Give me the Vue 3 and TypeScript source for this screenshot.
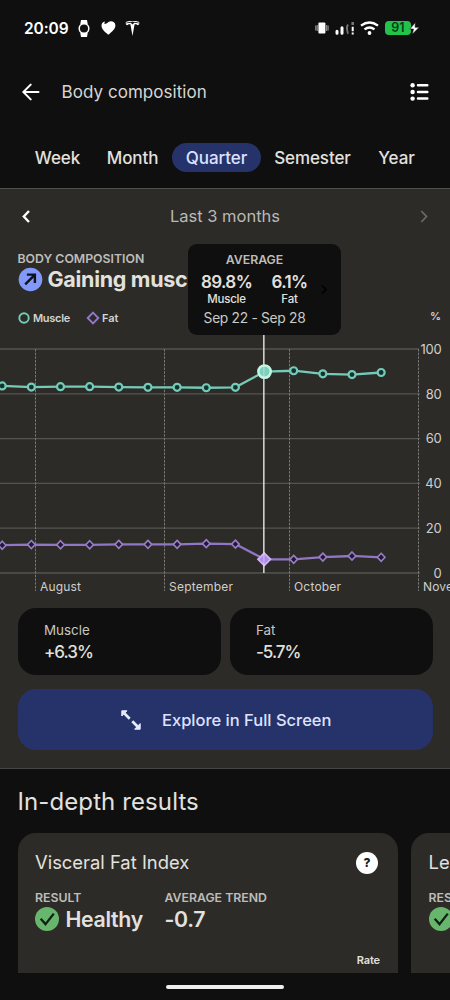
<script setup lang="ts">
interface Point { x: number; y: number }

const tabs: string[] = ['Week', 'Month', 'Quarter', 'Semester', 'Year']
const activeTab = 'Quarter'

const yOf = (v: number): number => 233 - v * 2.24
const toPoints = (values: number[]): Point[] =>
  values.map((v, i) => ({ x: 2.2 + i * 29.15, y: yOf(v) }))

const muscle = toPoints([83.5, 83, 83.2, 83.2, 83, 82.9, 82.9, 82.7, 82.9, 89.9, 90.3, 88.9, 88.6, 89.5])
const fat = toPoints([12.4, 12.7, 12.6, 12.6, 12.8, 12.8, 12.8, 13.1, 12.9, 6.1, 6.1, 7.1, 7.6, 7])
const line = (pts: Point[]): string => pts.map((p) => `${p.x},${p.y}`).join(' ')
const selected = 9
const ticks = [100, 80, 60, 40, 20, 0]
const months = [
  { x: 35.5, name: 'August', w: 41 },
  { x: 164.5, name: 'September', w: 64 },
  { x: 289.5, name: 'October', w: 47 },
  { x: 418.5, name: 'November', w: 60 },
]
const changes = [
  { name: 'Muscle', value: '+6.3%' },
  { name: 'Fat', value: '-5.7%' },
]
</script>

<template>
  <main class="screen">
    <div class="status">
      <span class="clock">20:09</span>
      <svg class="watch" width="12" height="17" viewBox="0 0 12 17">
        <path d="M3 0h6l.7 4H2.3zM3 17h6l.7-4H2.3z" fill="#fff" />
        <circle cx="6" cy="8.5" r="4.8" fill="#101010" stroke="#fff" stroke-width="1.5" />
      </svg>
      <svg class="heart" width="15" height="14" viewBox="0 0 15 14">
        <path d="M7.3 13.7C3.6 10.9.5 8 .5 4.6.5 2.3 2 .8 3.9.6L3.3 3l2.2-.6L7.6.9C10-.5 14.4.7 14.4 4.5c0 3.500-3.500 6.400-7.100 9.200z" fill="#fff" />
      </svg>
      <svg class="tesla" width="15" height="15" viewBox="0 0 15 15">
        <path d="M.8 1.400C4.800-.2 10.200-.2 14.200 1.400" fill="none" stroke="#fff" stroke-width="1" />
        <path d="M.5 2.600C2.600 1.900 4.300 1.700 5.800 1.800L7.500 3.600 9.200 1.800c1.500-.1 3.200.1 5.300.8-.4 1-1.100 1.500-2.100 1.600-.3-.8-1.200-1-2.800-.9L7.500 15 5.400 3.300c-1.600-.1-2.500.1-2.800.9C1.600 4.100.9 3.600.5 2.600z" fill="#fff" />
      </svg>
      <span class="grow"></span>
      <svg width="14" height="12" viewBox="0 0 14 12">
        <rect x="3.400" y=".5" width="7" height="11" rx="1" fill="#fff" />
        <path d="M.8 3.500v5M2.200 3v6M11.700 3v6M13.100 3.500v5" stroke="#ccc" stroke-width=".8" />
      </svg>
      <svg class="signal" width="20" height="14" viewBox="0 0 20 14">
        <path d="M2 10.200v2M7 6.800v5.400" stroke="#fff" stroke-width="3" stroke-linecap="round" />
        <path d="M13.300 3.800q-1.800 1-1.200 4.800t1 4.200" fill="none" stroke="#777" stroke-width="1.800" />
        <path d="M17.700 1v3" stroke="#777" stroke-width="2.600" />
        <path d="M17.700 5.700v4.500M17.700 11.500v2" stroke="#fff" stroke-width="2" />
      </svg>
      <svg class="wifi" width="19" height="14" viewBox="0 0 19 14">
        <path d="M1 4.700Q9.500-1.700 18 4.700M4.500 8.400q5-3.900 10 0" fill="none" stroke="#fff" stroke-width="2.300" />
        <circle cx="9.500" cy="12" r="1.900" fill="#fff" />
      </svg>
      <div class="battery"><span>91</span></div>
      <svg class="bolt" width="11" height="13" viewBox="0 0 11 13">
        <path d="M6.300.6.8 7h3.700L3.300 12.300 10.200 5.300H6.100z" fill="#fff" stroke="#101010" stroke-width=".6" />
      </svg>
    </div>

    <header class="header">
      <svg width="18" height="18" viewBox="0 0 18 18">
        <path d="M16.500 9H1.500M8.700 1.600 1.300 9l7.400 7.400" fill="none" stroke="#fff" stroke-width="2" stroke-linecap="round" />
      </svg>
      <h1>Body composition</h1>
      <svg width="19" height="18" viewBox="0 0 19 18">
        <g fill="#fff"><circle cx="2.600" cy="2.300" r="2.200" /><circle cx="2.600" cy="9" r="2.200" /><circle cx="2.600" cy="15.600" r="2.200" /></g>
        <path d="M8 2.300h9.300M8 9h9.300M8 15.600h9.300" stroke="#fff" stroke-width="2.500" stroke-linecap="round" />
      </svg>
    </header>

    <nav class="tabs">
      <button v-for="t in tabs" :key="t" :class="['tab', t.toLowerCase(), { active: t === activeTab }]">{{ t }}</button>
    </nav>

    <section class="panel">
      <div class="period">
        <svg width="8" height="13" viewBox="0 0 8 13"><path d="M7 1 1.800 6.500 7 12" fill="none" stroke="#fff" stroke-width="2.400" /></svg>
        <span>Last 3 months</span>
        <svg width="8" height="13" viewBox="0 0 8 13"><path d="M1.300 1l5.200 5.500L1.300 12" fill="none" stroke="#686866" stroke-width="1.800" /></svg>
      </div>
      <div class="summary">
        <div class="overline composition">BODY COMPOSITION</div>
        <div class="trend">
          <svg width="25" height="25" viewBox="0 0 25 25">
            <circle cx="12.500" cy="12.500" r="11.800" fill="#8399fa" />
            <path d="M7.200 17.300l9.500-9.500M8.900 7.600h8v8.300" fill="none" stroke="#10131f" stroke-width="2.400" />
          </svg>
          <strong>Gaining muscle</strong>
        </div>
        <div class="legend">
          <svg width="12" height="12" viewBox="0 0 12 12"><circle cx="6" cy="6" r="4.700" fill="none" stroke="#71cdb8" stroke-width="1.900" /></svg>
          <span class="lm">Muscle</span>
          <svg width="14" height="14" viewBox="0 0 14 14"><path d="M7 1.700 12.300 7 7 12.300 1.700 7z" fill="none" stroke="#9378cc" stroke-width="1.900" /></svg>
          <span class="lf">Fat</span>
          <span class="unit">%</span>
        </div>
        <div class="tooltip">
          <div class="overline">AVERAGE</div>
          <div class="averages">
            <div class="avg-muscle"><b>89.8%</b><small>Muscle</small></div>
            <div class="avg-fat"><b>6.1%</b><small>Fat</small></div>
          </div>
          <div class="range">Sep 22 - Sep 28</div>
          <svg class="more" width="6" height="11" viewBox="0 0 6 11"><path d="M1 1.500l4 4-4 4" fill="none" stroke="#000" stroke-width="1.600" /></svg>
        </div>
      </div>

      <svg class="chart" width="450" height="268" viewBox="0 0 450 268">
        <g v-for="t in ticks" :key="t">
          <line x1="0" :x2="t === 100 ? 419 : 420" :y1="yOf(t)" :y2="yOf(t)" stroke="#555550" stroke-width="1.300" />
          <text class="tick" x="441.500" :y="yOf(t) + 4.700" text-anchor="end">{{ t }}</text>
        </g>
        <g v-for="m in months" :key="m.name">
          <line :x1="m.x" :x2="m.x" y1="9" y2="251" stroke="#787874" stroke-width="1" stroke-dasharray="2.500 1.200" />
          <text class="month" :x="m.x + 4.500" y="250.500" :textLength="m.w">{{ m.name }}</text>
        </g>
        <polyline :points="line(muscle)" fill="none" stroke="#75cbb8" stroke-width="2.300" />
        <polyline :points="line(fat)" fill="none" stroke="#9076c5" stroke-width="2.300" />
        <template v-for="(p, i) in muscle" :key="i">
          <circle v-if="i !== selected" :cx="p.x" :cy="p.y" r="3.500" fill="#14332f" stroke="#75cbb8" stroke-width="2.200" />
          <circle v-else :cx="p.x" :cy="p.y" r="6.200" fill="#79d0bd" stroke="#c3f5e4" stroke-width="2.500" />
        </template>
        <template v-for="(p, i) in fat" :key="i">
          <path v-if="i !== selected" :transform="`translate(${p.x} ${p.y})`" d="M0-4 3.800 0 0 4-3.800 0z" fill="#25153e" stroke="#9880bf" stroke-width="1.600" />
          <path v-else :transform="`translate(${p.x - .3} ${p.y})`" d="M0-6.200 6.200 0 0 6.200-6.200 0z" fill="#ad89e8" stroke="#d1b5f4" stroke-width="1.800" />
        </template>
        <path :d="`M${muscle[selected].x - .7}-6V${muscle[selected].y - 6}M${muscle[selected].x - .7} ${muscle[selected].y + 6}V${fat[selected].y - 6}M${muscle[selected].x - .7} ${fat[selected].y + 6}V233`" stroke="#e8e8e5" stroke-width="1.400" />
        <path :d="`M${muscle[selected].x - .7} ${muscle[selected].y - 6}v12M${muscle[selected].x - .7} ${fat[selected].y - 6}v12`" stroke="#e8e8e5" stroke-opacity=".45" stroke-width="1.400" />
      </svg>

      <div class="changes">
        <div v-for="c in changes" :key="c.name" class="change"><span>{{ c.name }}</span><b>{{ c.value }}</b></div>
      </div>
      <button class="explore">
        <svg width="20" height="20" viewBox="0 0 20 20">
          <path d="M3.500 3.500 8.700 8.700M11.300 11.300l5.200 5.200" stroke="#e6eaff" stroke-width="2.700" />
          <path d="M.8.800h5.200L.8 6zM19.200 19.200h-5.600l5.600-5.600z" fill="#e6eaff" stroke="#e6eaff" stroke-width="1" stroke-linejoin="round" />
        </svg>
        <span>Explore in Full Screen</span>
      </button>
    </section>

    <section class="results">
      <h2>In-depth results</h2>
      <div class="cards">
        <article class="card">
          <div class="card-head">
            <h3>Visceral Fat Index</h3>
            <span class="help">?</span>
          </div>
          <div class="metrics">
            <div class="result">
              <div class="overline">RESULT</div>
              <div class="health">
                <svg width="24" height="24" viewBox="0 0 24 24"><circle cx="12" cy="12" r="12" fill="#68b56d" /><path d="M5.700 11.800l4.800 5.300 8.300-10.500" fill="none" stroke="#102313" stroke-width="2.300" /></svg>
                <strong>Healthy</strong>
              </div>
            </div>
            <div class="average">
              <div class="overline">AVERAGE TREND</div>
              <strong>-0.7</strong>
            </div>
          </div>
          <span class="rate">Rate</span>
        </article>
        <article class="card">
          <div class="card-head"><h3>Lean Mass</h3></div>
          <div class="metrics">
            <div class="result">
              <div class="overline">RESULT</div>
              <div class="health">
                <svg width="24" height="24" viewBox="0 0 24 24"><circle cx="12" cy="12" r="12" fill="#68b56d" /><path d="M5.700 11.800l4.800 5.300 8.300-10.500" fill="none" stroke="#102313" stroke-width="2.300" /></svg>
              </div>
            </div>
          </div>
        </article>
      </div>
    </section>
    <footer class="home"><i></i></footer>
  </main>
</template>

<style>
html, body { margin: 0; background: #0f0f0f; overflow: hidden; }
</style>

<style scoped>
* { box-sizing: border-box; }
.screen { width: 450px; height: 1000px; overflow: hidden; display: flex; flex-direction: column; background: #0f0f0f; color: #e2e1de; font-family: Inter, "Liberation Sans", sans-serif; white-space: nowrap; }
svg { display: block; flex: none; }
h1, h2, h3 { margin: 0; font-weight: 400; }
button { border: 0; margin: 0; padding: 0; font: inherit; background: none; color: inherit; }
.status { height: 56px; padding: 0 30px 0 24px; display: flex; align-items: center; flex: none; }
.clock { font-size: 15.500px; font-weight: 600; color: #fff; width: 54px; letter-spacing: -.1px; }
.heart { margin-left: 11px; }
.tesla { margin-left: 9px; }
.grow { flex: 1; }
.signal { margin-left: 6px; }
.wifi { margin-left: 5px; }
.battery { width: 26px; height: 14px; margin-left: 6px; border-radius: 4px; background: #22c34b; color: #083c14; font-size: 12.500px; font-weight: 600; line-height: 14px; text-align: center; }
.bolt { margin-left: -2px; }
.header { height: 72px; padding: 0 21px 0 22px; display: flex; align-items: center; flex: none; }
.header h1 { flex: 1; margin-left: 21.500px; font-size: 17px; font-weight: 400; letter-spacing: .05px; color: #d7d6d3; }
.tabs { height: 60px; padding: 15px 0 16px 22px; display: flex; flex: none; }
.tab { height: 29px; font-size: 17px; font-weight: 500; border-radius: 15px; letter-spacing: -.1px; }
.week { width: 71px; }
.tab.month { width: 79px; }
.quarter { width: 89px; }
.semester { width: 103px; }
.year { width: 65px; }
.active { background: #26336b; color: #dbe2ff; }
.panel { height: 581px; flex: none; background: #2c2b28; border-top: 1px solid #51514e; border-bottom: 1px solid #454542; }
.period { height: 54px; padding: 0 22px; display: flex; align-items: center; justify-content: space-between; color: #bab9b5; font-size: 16.500px; }
.summary { height: 97px; padding: 8.500px 0 0 17.500px; position: relative; }
.overline { font-size: 12.300px; line-height: 14px; font-weight: 600; color: #bebdb9; letter-spacing: 0; }
.trend { display: flex; align-items: center; gap: 5px; height: 27px; width: 170px; overflow: hidden; }
.trend strong { font-size: 21.500px; line-height: 26px; font-weight: 700; letter-spacing: -.3px; }
.legend { margin-top: 18.500px; height: 14px; display: flex; align-items: center; font-size: 11px; font-weight: 600; color: #d5d4d0; }
.lm { margin-left: 3.500px; width: 52.500px; letter-spacing: -.3px; }
.lf { margin-left: 2.500px; }
.unit { margin-left: auto; padding-right: 9px; padding-bottom: 4px; }
.tooltip { position: absolute; left: 188px; top: 1px; width: 153px; height: 91px; border-radius: 9px; background: #0f0f0f; text-align: center; padding: 9px 20px 0 0; }
.averages { display: flex; margin-top: 7px; }
.averages b { display: block; font-size: 17px; line-height: 17px; font-weight: 600; letter-spacing: -.6px; }
.averages small { display: block; font-size: 11.500px; line-height: 16px; font-weight: 500; letter-spacing: -.2px; }
.avg-muscle { width: 77px; }
.avg-fat { width: 49px; }
.range { font-size: 13.800px; line-height: 22px; color: #cbcac6; letter-spacing: -.3px; }
.more { position: absolute; right: 14px; top: 40px; }
.chart { overflow: visible; }
.tick { font-size: 13px; fill: #d0cfcb; letter-spacing: -.2px; }
.chart .month { font-size: 12px; fill: #d0cfcb; }
.changes { display: grid; grid-template-columns: 1fr 1fr; gap: 9px; padding: 0 17.500px; }
.change { height: 67px; border-radius: 18px; background: #0f0f0f; padding: 13px 0 0 26.500px; }
.change span { display: block; font-size: 13.400px; line-height: 18px; color: #c7c6c2; }
.change b { display: block; font-size: 17px; line-height: 27px; font-weight: 500; letter-spacing: -1px; }
.explore { display: flex; align-items: center; gap: 21px; width: 415px; height: 61px; margin: 14px 0 0 17.500px; padding-left: 103.500px; border-radius: 18px; background: #26336b; color: #dce3ff; font-size: 16.500px; font-weight: 500; }
.results { height: 204px; overflow: hidden; padding-left: 17.500px; flex: none; }
.results h2 { font-size: 24px; line-height: 30px; padding: 17.500px 0 16px; letter-spacing: .1px; }
.cards { display: flex; gap: 13.500px; }
.card { width: 380px; height: 160px; flex: none; border-radius: 18px; padding: 18px 17.500px; background: #2c2b28; }
.card-head { display: flex; justify-content: space-between; height: 40px; }
.card-head h3 { font-size: 18.400px; line-height: 23px; }
.help { width: 22px; height: 22px; margin: 1px 2px 0 0; border-radius: 50%; background: #fff; color: #1c1c1b; font-size: 12px; line-height: 22px; font-weight: 800; text-align: center; }
.metrics { display: flex; height: 58px; }
.result { width: 129.500px; }
.health { display: flex; align-items: center; gap: 6.500px; height: 28px; }
.metrics strong { font-size: 21.300px; line-height: 28px; font-weight: 600; letter-spacing: -.3px; }
.rate { display: block; text-align: right; font-size: 11px; line-height: 22px; font-weight: 600; letter-spacing: -.1px; }
.home { display: flex; justify-content: center; padding-top: 12px; }
.home i { width: 118px; height: 4px; border-radius: 2px; background: #efefef; }
</style>
